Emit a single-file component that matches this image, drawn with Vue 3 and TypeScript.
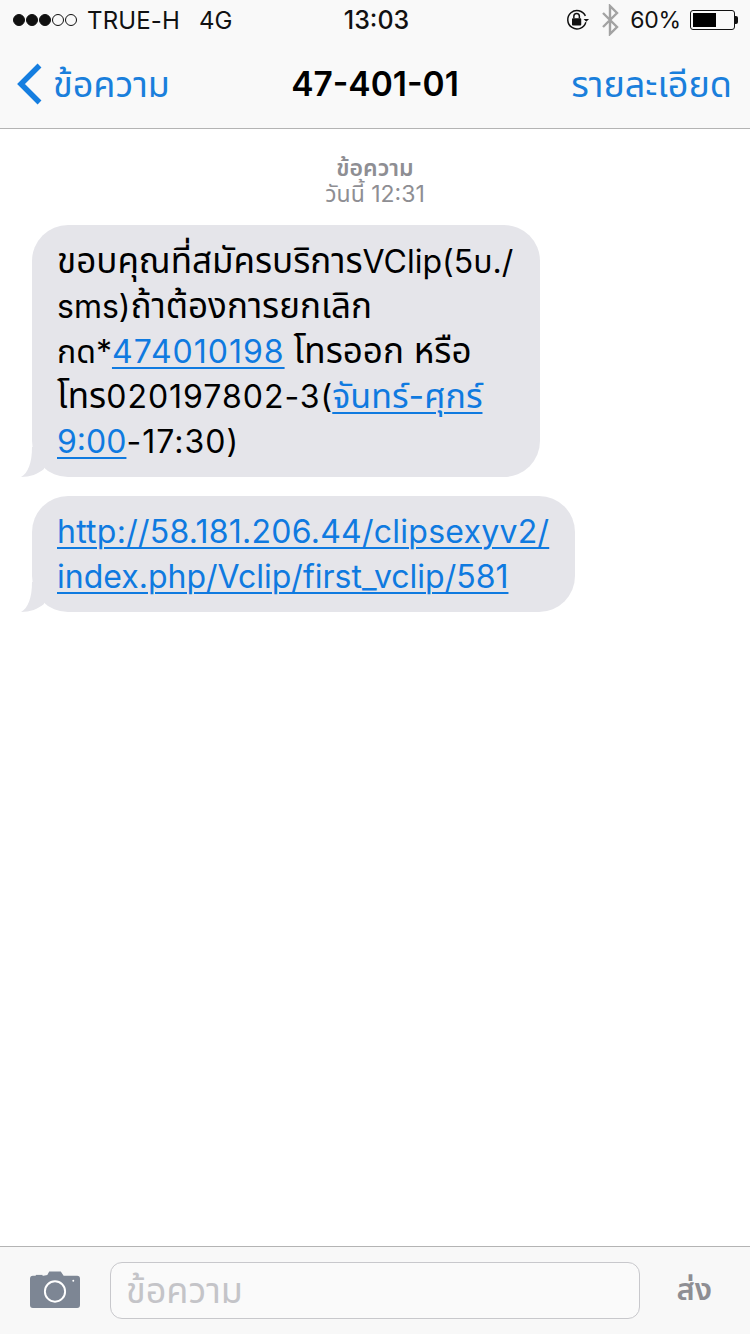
<script setup lang="ts">
const thread = 'ข้อความ'
</script>

<template>
  <div class="screen">
    <header class="top">
      <div class="status">
        <div class="status-left">
          <span class="signal">
            <i v-for="n in 3" :key="n" class="dot full"></i>
            <i v-for="n in 2" :key="n" class="dot"></i>
          </span>
          <span class="carrier">TRUE-H</span>
          <span class="net">4G</span>
        </div>
        <div class="clock">13:03</div>
        <div class="status-right">
          <svg class="lock" width="24" height="24" viewBox="0 0 26 24">
            <path d="M21.5 14.500A10 10 0 1 1 21 7.500" fill="none" stroke="#111" stroke-width="1.600" />
            <path d="M19 11h6l-3 3z" fill="#111" />
            <rect x="6.500" y="10" width="10" height="8" rx="1" fill="#111" />
            <path d="M8.500 10V8a3 3 0 0 1 6 0v2" fill="none" stroke="#111" stroke-width="1.600" />
          </svg>
          <svg class="bt" width="18" height="32" viewBox="0 0 18 32">
            <path d="M2 9l14 14-7 7V2l7 7L2 23" fill="none" stroke="#a3a3a3" stroke-width="2.400" />
          </svg>
          <span class="pct">60%</span>
          <span class="battery"><span class="level" style="width: 60%"></span></span>
          <span class="nub"></span>
        </div>
      </div>
      <nav class="nav">
        <div class="back">
          <svg width="30" height="44" viewBox="0 0 30 44">
            <path d="M24.500 3.500L6 22l18.500 18.500" fill="none" stroke="#157ee0" stroke-width="5.500" />
          </svg>
          <span class="back-label">{{ thread }}</span>
        </div>
        <div class="title">47-401-01</div>
        <div class="details">รายละเอียด</div>
      </nav>
    </header>

    <main class="thread">
      <div class="stamp">
        <div class="stamp-kind">{{ thread }}</div>
        <div>วันนี้ 12:31</div>
      </div>
      <div class="bubble first">
        <span class="th">ขอบคุณที่สมัครบริการ</span>VClip(5บ./<br />
        sms)<span class="th">ถ้าต้องการยกเลิก</span><br />
        <span class="th tight">กด</span>*<a class="num">474010198</a> <span class="th">โทรออก หรือ</span><br />
        <span class="th">โทร</span><span class="num">020197802-3</span>(<a class="day">จันทร์-ศุกร์</a><br />
        <a>9:00</a><span class="num">-17:30</span>)
      </div>
      <div class="bubble second">
        <a class="wide">http://58.181.206.44/clipsexyv2/</a><br />
        <a>index.php/Vclip/first_vclip/581</a>
      </div>
    </main>

    <footer class="composer">
      <svg class="camera" width="50" height="37" viewBox="0 0 52 38" preserveAspectRatio="none">
        <path d="M6 4h7v2H6z" fill="#7d8694" />
        <path d="M3 5h11l4-1 2-3.500h12L35 5h14a3 3 0 0 1 3 3v27a3 3 0 0 1-3 3H3a3 3 0 0 1-3-3V8a3 3 0 0 1 3-3z" fill="#7d8694" />
        <circle cx="26" cy="21" r="10.500" fill="none" stroke="#fff" stroke-width="2" />
        <circle cx="45" cy="10" r="1" fill="#fff" />
      </svg>
      <div class="field">{{ thread }}</div>
      <div class="send">ส่ง</div>
    </footer>
  </div>
</template>

<style scoped>
.screen {
  width: 750px;
  height: 1334px;
  display: flex;
  flex-direction: column;
  background: #fff;
  color: #000;
  font-family: "Inter", "Noto Sans", "Noto Sans Thai", "DejaVu Sans", sans-serif;
  overflow: hidden;
}

.top {
  height: 129px;
  flex: none;
  background: #f9f9f9;
  border-bottom: 1px solid #b4b4b4;
  box-sizing: border-box;
}

.status {
  height: 40px;
  display: grid;
  grid-template-columns: 1fr auto 1fr;
  align-items: center;
  padding: 0 11px 0 13px;
  font-size: 24px;
  color: #111;
}

.status-left,
.status-right {
  display: flex;
  align-items: center;
}

.status-right {
  justify-content: flex-end;
}

.signal {
  display: flex;
  gap: 1px;
  margin-right: 10px;
}

.dot {
  width: 12px;
  height: 12px;
  box-sizing: border-box;
  border-radius: 50%;
  border: 1px solid #111;
}

.dot.full {
  background: #111;
}

.carrier {
  letter-spacing: 0.15px;
}

.net {
  margin-left: 19px;
}

.clock {
  font-size: 25px;
  font-weight: 500;
  margin-left: 1px;
}

.lock {
  margin-right: 11px;
}

.bt {
  margin-right: 11px;
}

.pct {
  font-size: 23px;
  letter-spacing: -0.2px;
  margin-right: 9px;
}

.battery {
  width: 45px;
  height: 20px;
  box-sizing: border-box;
  border: 1px solid #111;
  border-radius: 3px;
  padding: 2px;
  display: flex;
}

.level {
  background: #000;
  display: block;
}

.nub {
  width: 3px;
  height: 8px;
  margin-right: 1px;
  background: #111;
  border-radius: 0 2px 2px 0;
}

.nav {
  height: 88px;
  display: grid;
  grid-template-columns: 1fr auto 1fr;
  align-items: center;
  padding: 0 18px 0 15px;
}

.back {
  display: flex;
  align-items: center;
  gap: 8px;
  color: #1a7fdc;
  font-size: 36px;
}

.back-label {
  padding-top: 3px;
}

.title {
  font-size: 33.500px;
  font-weight: 600;
  margin-left: 3px;
}

.details {
  padding-top: 3px;
  text-align: right;
  color: #1a7fdc;
  font-size: 36px;
}

.thread {
  flex: 1;
  display: flex;
  flex-direction: column;
  align-items: flex-start;
  padding-left: 32px;
}

.stamp {
  align-self: center;
  margin: 26px 0 18px -32px;
  font-size: 23px;
  line-height: 26px;
  color: #8e8e93;
  text-align: center;
}

.stamp-kind {
  font-weight: 600;
}

.bubble {
  position: relative;
  box-sizing: border-box;
  background: #e5e5ea;
  border-radius: 36px;
  padding: 14px 25px 15px;
  font-size: 32px;
  line-height: 45px;
  white-space: nowrap;
}

.bubble::before {
  content: "";
  position: absolute;
  left: -11px;
  bottom: 0;
  width: 30px;
  height: 30px;
  background: #e5e5ea;
  clip-path: path("M11 0C11 16 7 26 0 30 9 30 17 27 23 22V0Z");
}

.first {
  width: 508px;
  height: 252px;
  margin-bottom: 19px;
}

.second {
  width: 543px;
  height: 116px;
  padding-top: 13px;
}

.bubble a {
  color: #0f7ae0;
  text-decoration: underline;
  text-underline-offset: 4px;
  text-decoration-thickness: 2px;
}

.th {
  font-size: 35px;
  line-height: 1;
}

.th.tight {
  font-size: 32px;
}

.num {
  letter-spacing: 1px;
}

.bubble .day {
  font-size: 34px;
  line-height: 1;
}

.wide {
  letter-spacing: 0.25px;
}

.composer {
  height: 88px;
  flex: none;
  box-sizing: border-box;
  display: flex;
  align-items: center;
  padding: 0 38px 0 30px;
  background: #f8f8f8;
  border-top: 1px solid #b4b4b4;
}

.camera {
  flex: none;
  margin: -2px 30px 0 0;
}

.field {
  width: 530px;
  height: 57px;
  box-sizing: border-box;
  border: 1px solid #c8c8cc;
  border-radius: 12px;
  background: #fafafa;
  color: #c4c4c8;
  font-size: 36px;
  line-height: 55px;
  padding-left: 15px;
}

.send {
  margin-left: auto;
  font-size: 31px;
  font-weight: 600;
  color: #8e8e93;
}
</style>
